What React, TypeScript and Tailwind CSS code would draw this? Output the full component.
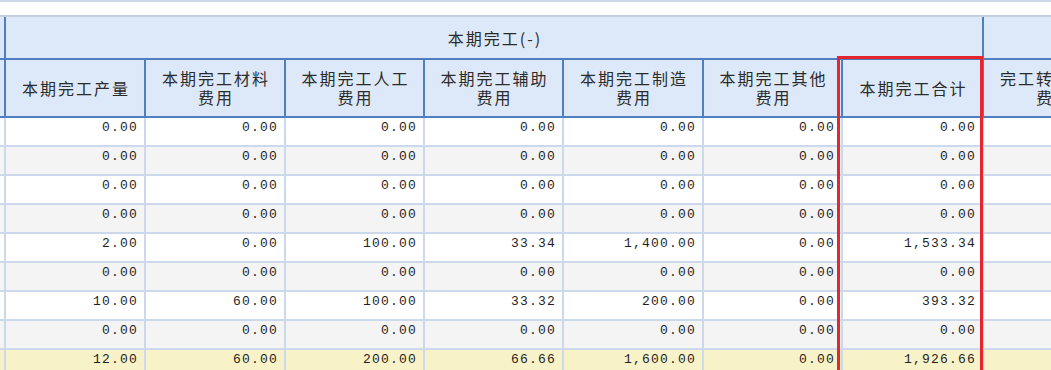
const cols = [
  { w: "w-[140px]", label: ["本期完工产量"] },
  { w: "w-[140px]", label: ["本期完工材料", "费用"] },
  { w: "w-[139px]", label: ["本期完工人工", "费用"] },
  { w: "w-[139px]", label: ["本期完工辅助", "费用"] },
  { w: "w-[140px]", label: ["本期完工制造", "费用"] },
  { w: "w-[139px]", label: ["本期完工其他", "费用"] },
  { w: "w-[141px]", label: ["本期完工合计"] },
];

const rows: string[][] = [
  ["0.00", "0.00", "0.00", "0.00", "0.00", "0.00", "0.00"],
  ["0.00", "0.00", "0.00", "0.00", "0.00", "0.00", "0.00"],
  ["0.00", "0.00", "0.00", "0.00", "0.00", "0.00", "0.00"],
  ["0.00", "0.00", "0.00", "0.00", "0.00", "0.00", "0.00"],
  ["2.00", "0.00", "100.00", "33.34", "1,400.00", "0.00", "1,533.34"],
  ["0.00", "0.00", "0.00", "0.00", "0.00", "0.00", "0.00"],
  ["10.00", "60.00", "100.00", "33.32", "200.00", "0.00", "393.32"],
  ["0.00", "0.00", "0.00", "0.00", "0.00", "0.00", "0.00"],
  ["12.00", "60.00", "200.00", "66.66", "1,600.00", "0.00", "1,926.66"],
];

const cjk = { fontFamily: '"Noto Sans CJK SC", "Noto Sans", sans-serif' };
const mono = { fontFamily: '"Liberation Mono", "DejaVu Sans Mono", monospace' };

function rowBg(i: number) {
  if (i === rows.length - 1) return "bg-[#f8f2c8]";
  return i % 2 === 0 ? "bg-white" : "bg-[#f4f4f4]";
}

function HeadLabel({ lines }: { lines: string[] }) {
  return (
    <div className="flex flex-col items-center text-[16px] tracking-[2px] pl-[2px] text-[#2b2b2b]">
      {lines.map((l) => (
        <span key={l} className="block h-[19px] leading-[19px]">
          {l}
        </span>
      ))}
    </div>
  );
}

export default function App() {
  return (
    <div className="relative w-[1051px] h-[370px] overflow-hidden bg-white" style={cjk}>
      <div className="h-[17px] border-t-2 border-b-2 border-t-[#cdd7e5] border-b-[#c4d0e0] bg-white" />

      {/* group header row */}
      <div className="flex h-[43px] bg-[#dde9f9] border-b-2 border-[#4f7fc0]">
        <div className="w-[4px] shrink-0" />
        <div className="w-[978px] shrink-0 border-l-2 border-[#4f7fc0] flex items-center justify-center">
          <span className="text-[16px] tracking-[2px] pl-[2px] text-[#2b2b2b]">本期完工(-)</span>
        </div>
        <div className="w-[140px] shrink-0 border-l-2 border-[#4f7fc0]" />
      </div>

      {/* column headers */}
      <div className="flex h-[58px] bg-[#dde9f9] border-b-2 border-[#4f7fc0]">
        <div className="w-[4px] shrink-0" />
        {cols.map((c) => (
          <div
            key={c.label.join("")}
            className={`${c.w} shrink-0 border-l-2 border-[#4f7fc0] flex items-center justify-center`}
          >
            <HeadLabel lines={c.label} />
          </div>
        ))}
        <div className="w-[140px] shrink-0 border-l-2 border-[#4f7fc0] flex items-center justify-center">
          <HeadLabel lines={["完工转出成本", "费用"]} />
        </div>
      </div>

      {/* data rows */}
      {rows.map((r, i) => (
        <div key={i} className={`flex h-[29px] border-b-2 border-[#ccd9ec] ${rowBg(i)}`}>
          <div className="w-[4px] shrink-0" />
          {r.map((v, j) => (
            <div
              key={j}
              className={`${cols[j].w} shrink-0 border-l-2 border-[#ccd9ec] pr-[6px] pt-[2px] text-right text-[13px] leading-[16px] tracking-[1.2px] text-[#1f1f1f]`}
              style={mono}
            >
              {v}
            </div>
          ))}
          <div className="w-[140px] shrink-0 border-l-2 border-[#ccd9ec]" />
        </div>
      ))}

      {/* highlight annotation */}
      <div className="absolute left-[837px] top-[56px] w-[146px] h-[340px] border-[3px] border-[#e5262e]" />
    </div>
  );
}
